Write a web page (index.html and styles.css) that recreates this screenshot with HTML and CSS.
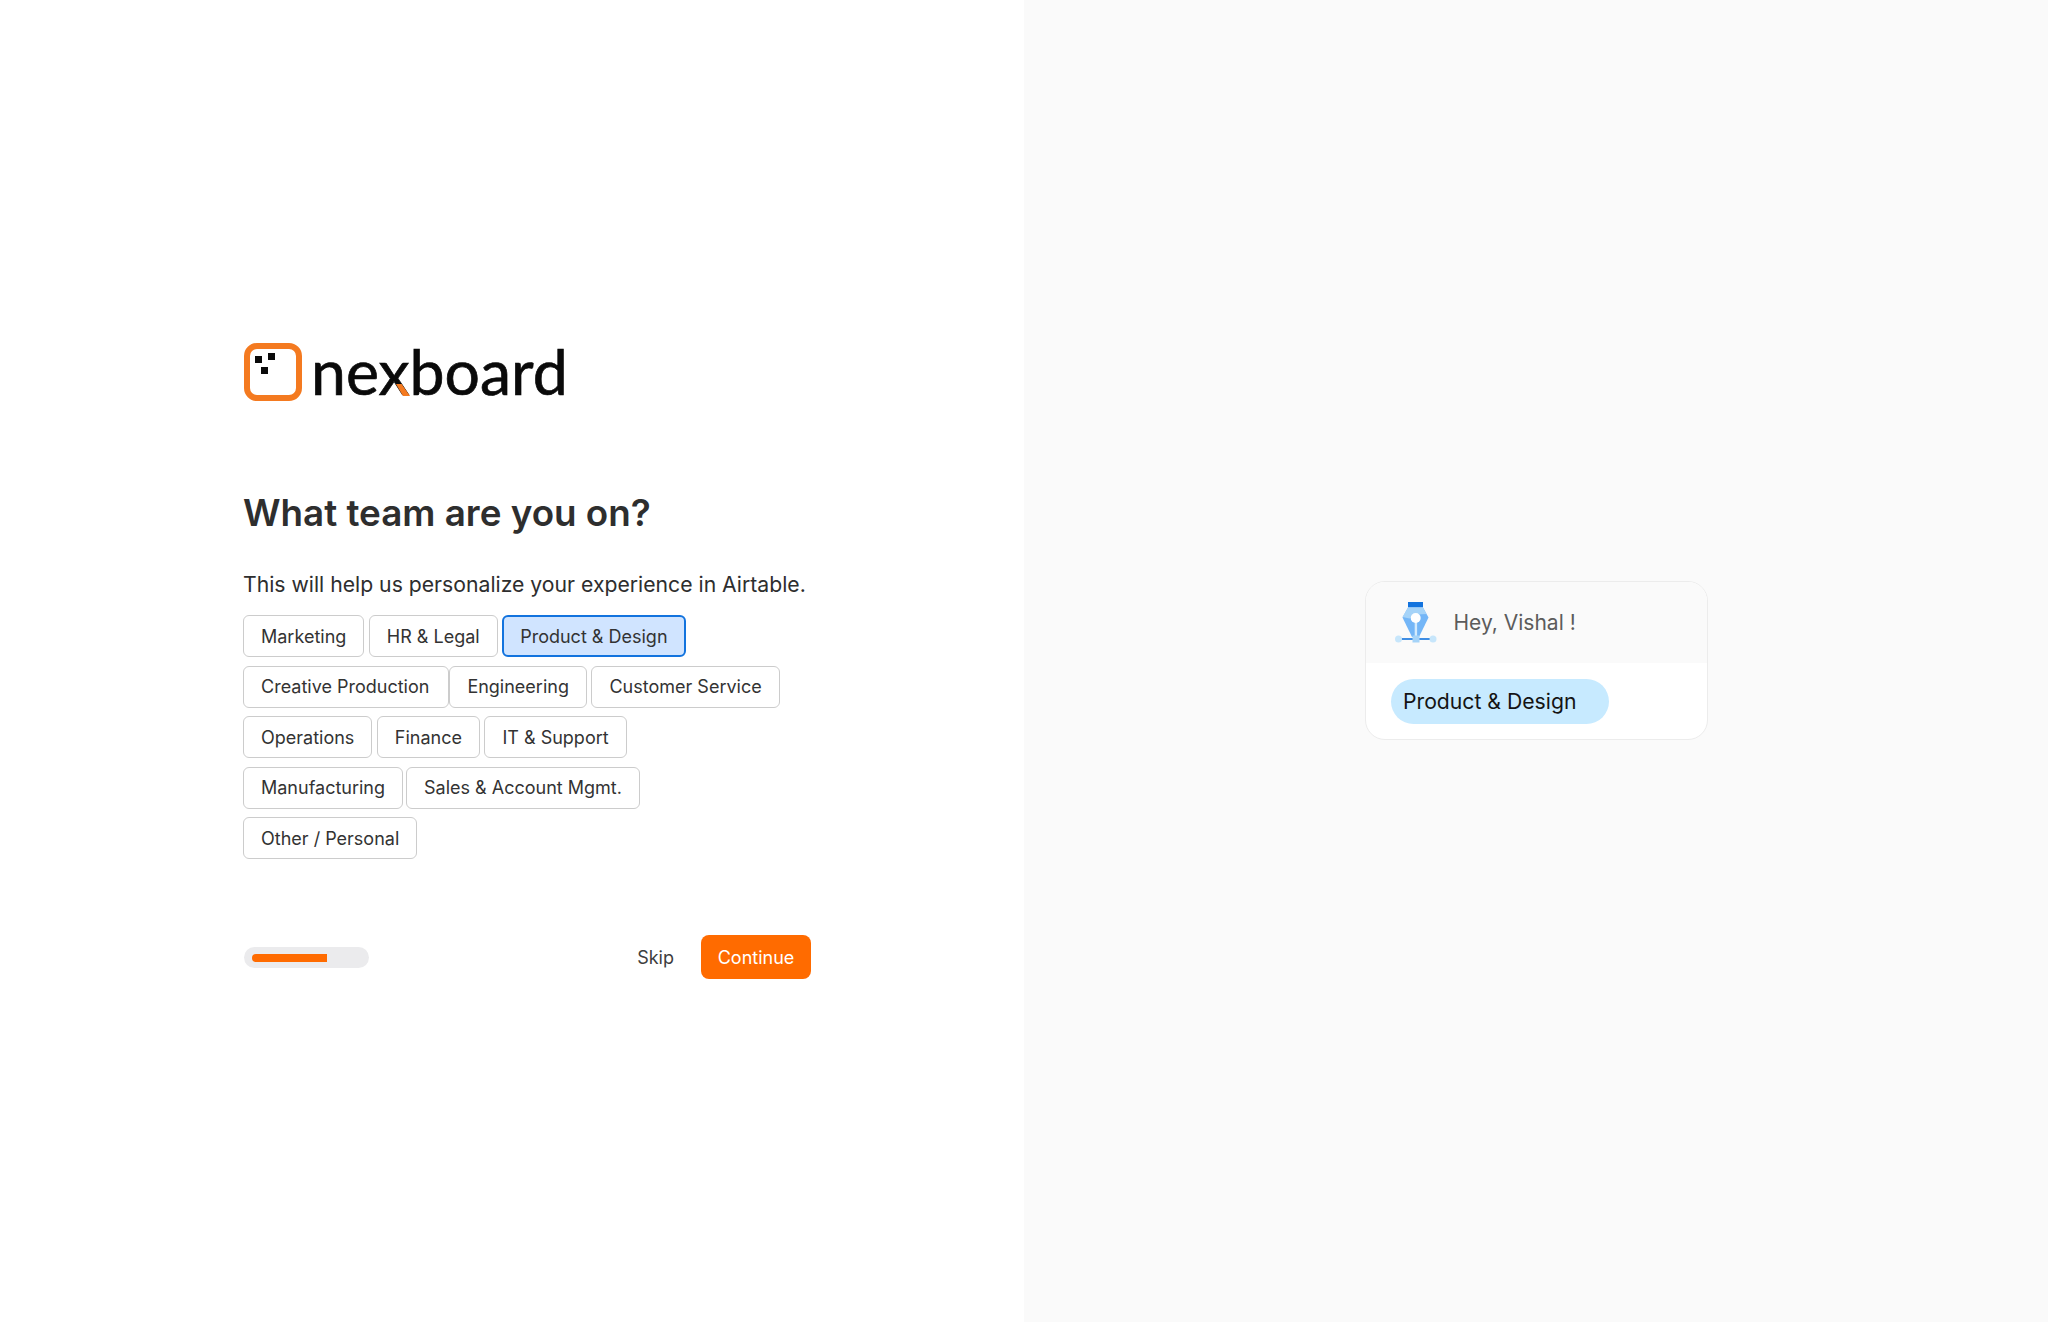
FILE: index.html
```html
<!DOCTYPE html>
<html>
<head>
    <meta charset="UTF-8">
    <title>nexboard - What team are you on?</title>
    <link rel="stylesheet" href="styles.css">
</head>
<body>
    <div class="page">
        <div class="left">
            <div class="panel">
                <div class="logo">
                    <svg class="logo-mark" width="58" height="58" viewBox="0 0 58 58">
                        <rect x="3" y="3" width="52" height="52" rx="10" fill="#fff" stroke="#f47a20" stroke-width="6"/>
                        <rect x="11" y="13" width="7" height="7" fill="#0a0a0a"/>
                        <rect x="24" y="10" width="7" height="7" fill="#0a0a0a"/>
                        <rect x="17" y="24" width="7" height="7" fill="#0a0a0a"/>
                    </svg>
                    <div class="wordmark">nexboard<span class="x-accent"></span></div>
                </div>
                <h1>What team are you on?</h1>
                <p class="sub">This will help us personalize your experience in Airtable.</p>
                <div class="chips">
                    <div class="chip-row">
                        <div class="chip">Marketing</div>
                        <div class="chip">HR &amp; Legal</div>
                        <div class="chip selected">Product &amp; Design</div>
                    </div>
                    <div class="chip-row">
                        <div class="chip tight">Creative Production</div>
                        <div class="chip">Engineering</div>
                        <div class="chip">Customer Service</div>
                    </div>
                    <div class="chip-row">
                        <div class="chip">Operations</div>
                        <div class="chip">Finance</div>
                        <div class="chip">IT &amp; Support</div>
                    </div>
                    <div class="chip-row">
                        <div class="chip snug">Manufacturing</div>
                        <div class="chip">Sales &amp; Account Mgmt.</div>
                    </div>
                    <div class="chip-row">
                        <div class="chip">Other / Personal</div>
                    </div>
                </div>
                <div class="footer">
                    <div class="progress"><div class="progress-fill"></div></div>
                    <div class="actions">
                        <div class="skip">Skip</div>
                        <div class="continue">Continue</div>
                    </div>
                </div>
            </div>
        </div>
        <div class="right">
            <div class="card">
                <div class="card-head">
                    <svg class="nib" width="44" height="44" viewBox="0 0 44 44">
                        <!-- pen tool -->
                        <rect x="14" y="2" width="15" height="5.5" fill="#1273de"/>
                        <path d="M14 7.5h15l5.5 10L25 37h-7L8.5 17.5z" fill="#74b6f7"/>
                        <path d="M14 7.5h15l3.5 6.500-10 .5-7 4-7-1.500z" fill="#a5d3f8"/>
                        <rect x="20.7" y="18" width="2.4" height="19" fill="#d3ebfd"/>
                        <circle cx="21.7" cy="18" r="5" fill="#fff"/>
                        <rect x="5" y="38.2" width="34" height="1.6" fill="#1273de"/>
                        <rect x="18.5" y="35.5" width="7" height="7" fill="#a5d3f8"/>
                        <circle cx="4.5" cy="39" r="3.5" fill="#c7e6fb"/>
                        <circle cx="39" cy="39" r="3.5" fill="#c7e6fb"/>
                    </svg>
                    <div class="hey">Hey, Vishal !</div>
                </div>
                <div class="card-body">
                    <div class="pill">Product &amp; Design</div>
                </div>
            </div>
        </div>
    </div>
</body>
</html>
```
FILE: styles.css
```css
* {
    box-sizing: border-box;
}
body {
    margin: 0;
    font-family: Inter, "Noto Sans", sans-serif;
    color: #2e2e2e;
    background-color: #fff;
}
.page {
    display: flex;
    height: 1322px;
}
.left {
    width: 1024px;
    display: flex;
    align-items: center;
    padding-left: 243px;
}
.right {
    width: 1024px;
    background-color: #fafafa;
    display: flex;
    align-items: center;
    justify-content: center;
}
.panel {
    width: 568px;
}
.logo {
    display: flex;
    align-items: flex-start;
    height: 58px;
}
.logo-mark {
    display: block;
    margin-left: 1px;
}
.wordmark {
    position: relative;
    margin-left: 9px;
    font-family: Lato, sans-serif;
    font-size: 62.5px;
    line-height: 56px;
    color: #0a0a0a;
    -webkit-text-stroke: 0.7px #0a0a0a;
}
.x-accent {
    position: absolute;
    left: 85px;
    top: 41px;
    width: 14px;
    height: 12px;
    background-color: #f47a20;
    clip-path: polygon(0 0, 40% 0, 100% 100%, 50% 100%);
}
h1 {
    margin: 90px 0 0;
    font-size: 36.8px;
    line-height: 44px;
    font-weight: 600;
    color: #2e2e2e;
}
.sub {
    margin: 34px 0 0;
    font-size: 21.2px;
    line-height: 30px;
    color: #2e2e2e;
    white-space: nowrap;
}
.chips {
    display: flex;
    flex-direction: column;
    gap: 8.5px;
    margin-top: 16px;
}
.chip-row {
    display: flex;
    gap: 4.5px;
}
.chip {
    height: 42px;
    padding: 0 17px;
    display: flex;
    align-items: center;
    font-size: 18px;
    color: #333;
    background-color: #fff;
    border: 1px solid #ccc;
    border-radius: 6px;
}
.chip.tight {
    margin-right: -4.5px;
    padding-right: 19px;
}
.chip.snug {
    margin-right: -1.5px;
}
.chip.selected {
    background-color: #d0e4ff;
    border: 2px solid #1273de;
    padding: 0 16px;
}
.footer {
    display: flex;
    align-items: center;
    justify-content: space-between;
    margin-top: 76px;
}
.progress {
    width: 125px;
    height: 21px;
    margin-left: 1px;
    padding: 7px 8px;
    background-color: #ebebed;
    border-radius: 11px;
}
.progress-fill {
    width: 75px;
    height: 8px;
    background-color: #ff6b00;
    border-radius: 4px 0 0 4px;
}
.actions {
    display: flex;
    align-items: center;
    gap: 27px;
}
.skip {
    font-size: 18px;
    color: #3d3d3d;
}
.continue {
    width: 110px;
    height: 44px;
    display: flex;
    align-items: center;
    justify-content: center;
    font-size: 18px;
    color: #fff;
    background-color: #ff6b00;
    border-radius: 8px;
}
.card {
    width: 343px;
    height: 159px;
    margin-top: -2px;
    overflow: hidden;
    background-color: #fff;
    border: 1px solid #ececec;
    border-radius: 20px;
}
.card-head {
    height: 81px;
    display: flex;
    align-items: center;
    padding-left: 28px;
    gap: 16px;
    background-color: #fafafa;
}
.nib {
    display: block;
}
.hey {
    font-size: 21px;
    color: #5c5c5c;
}
.card-body {
    padding: 16px 0 0 25px;
}
.pill {
    width: 218px;
    height: 45px;
    padding-left: 12.5px;
    display: flex;
    align-items: center;
    font-size: 21.2px;
    color: #141414;
    background-color: #c7eaff;
    border-radius: 23px;
}
```
